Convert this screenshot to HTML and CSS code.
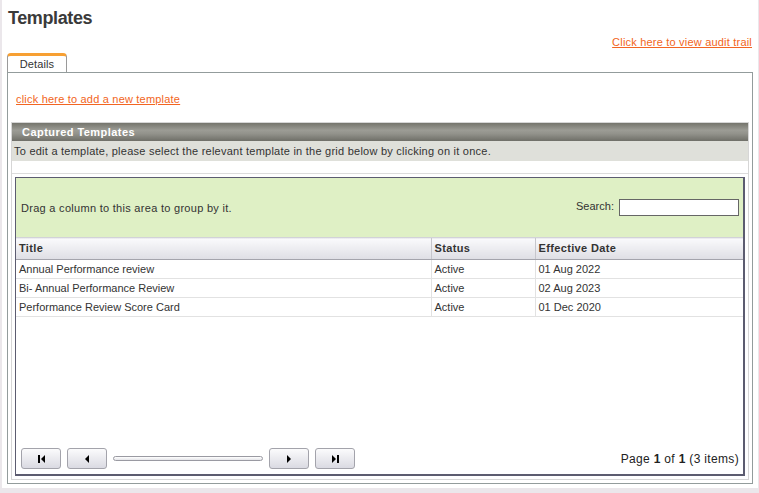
FILE: index.html
```html
<!DOCTYPE html>
<html>
<head>
  <title>Templates</title>
  <meta charset="UTF-8">
  <link rel="stylesheet" href="styles.css">
</head>
<body>
  <div class="page">
    <h1>Templates</h1>
    <div class="audit">
      <a href="#" class="link">Click here to view audit trail</a>
    </div>
    <div class="tabs">
      <span class="tab">Details</span>
    </div>
    <div class="tab-panel">
      <div class="add-row">
        <a href="#" class="link">click here to add a new template</a>
      </div>
      <div class="panel">
        <div class="panel-title">Captured Templates</div>
        <div class="panel-note">To edit a template, please select the relevant template in the grid below by clicking on it once.</div>
        <div class="panel-spacer"></div>
        <div class="grid-wrap">
          <div class="grid">
            <div class="group-bar">
              <span class="group-hint">Drag a column to this area to group by it.</span>
              <label class="search">Search: <input type="text"></label>
            </div>
            <table class="grid-table">
              <colgroup>
                <col class="col-title">
                <col class="col-status">
                <col>
              </colgroup>
              <thead>
                <tr>
                  <th>Title</th>
                  <th>Status</th>
                  <th>Effective Date</th>
                </tr>
              </thead>
              <tbody>
                <tr>
                  <td>Annual Performance review</td>
                  <td>Active</td>
                  <td>01 Aug 2022</td>
                </tr>
                <tr>
                  <td>Bi- Annual Performance Review</td>
                  <td>Active</td>
                  <td>02 Aug 2023</td>
                </tr>
                <tr>
                  <td>Performance Review Score Card</td>
                  <td>Active</td>
                  <td>01 Dec 2020</td>
                </tr>
              </tbody>
            </table>
            <div class="grid-fill"></div>
            <div class="pager">
              <button class="pager-btn">
                <svg width="7" height="8" viewBox="0 0 7 8"><rect x="0" y="0" width="2" height="8"/><polygon points="7,0 7,8 3,4"/></svg>
              </button>
              <button class="pager-btn">
                <svg width="4" height="8" viewBox="0 0 4 8"><polygon points="4,0 4,8 0,4"/></svg>
              </button>
              <div class="pager-track"></div>
              <button class="pager-btn">
                <svg width="4" height="8" viewBox="0 0 4 8"><polygon points="0,0 0,8 4,4"/></svg>
              </button>
              <button class="pager-btn">
                <svg width="7" height="8" viewBox="0 0 7 8"><polygon points="0,0 0,8 4,4"/><rect x="5" y="0" width="2" height="8"/></svg>
              </button>
              <span class="pager-info">Page <b>1</b> of <b>1</b> (3 items)</span>
            </div>
          </div>
        </div>
      </div>
    </div>
  </div>
</body>
</html>
```

FILE: styles.css
```css
body {
  margin: 0;
  background-color: #ebe7eb;
  font-family: "Liberation Sans", Arial, sans-serif;
  font-size: 11px;
  color: #333;
}

.page {
  background-color: #fff;
  margin: 0 1px 0 2px;
  height: 488px;
  padding: 0 5px;
  box-sizing: border-box;
}

h1 {
  margin: 0;
  padding: 7px 0 0 1px;
  font-size: 18px;
  line-height: 22px;
  letter-spacing: -0.4px;
  color: #3a3a3a;
}

.link {
  color: #f26522;
  text-decoration: underline;
  letter-spacing: 0.2px;
}

.audit {
  margin-top: 7px;
  line-height: 13px;
  text-align: right;
  padding-right: 1px;
}

.tabs {
  display: flex;
  margin-top: 4px;
}

.tab {
  width: 58px;
  height: 16px;
  line-height: 16px;
  text-align: center;
  border: 1px solid #9a9a9a;
  border-top: 3px solid #f7a033;
  border-bottom: none;
  border-radius: 4px 4px 0 0;
  color: #333;
  letter-spacing: 0.1px;
}

.tab-panel {
  border: 1px solid #939c9c;
  padding: 3px;
}

.add-row {
  margin: 17px 0 16px;
  padding-left: 5px;
  line-height: 13px;
}

.panel {
  border: 1px solid #d6d6d6;
}

.panel-title {
  height: 18px;
  line-height: 18px;
  padding-left: 10px;
  font-weight: bold;
  letter-spacing: 0.45px;
  color: #fff;
  background: linear-gradient(#74746c, #9c9c95 40%, #92928b 60%, #6f6f68);
}

.panel-note {
  height: 20px;
  line-height: 20px;
  padding-left: 2px;
  letter-spacing: 0.24px;
  background-color: #dfe0da;
  color: #333;
}

.panel-spacer {
  height: 12px;
}

.grid-wrap {
  border-top: 1px solid #dcdcdc;
  padding: 3px;
}

.grid {
  height: 299px;
  box-sizing: border-box;
  border: 1px solid #5c5c70;
  border-width: 1px 2px 2px 1px;
  display: flex;
  flex-direction: column;
}

.group-bar {
  height: 59px;
  flex: none;
  display: flex;
  align-items: center;
  justify-content: space-between;
  padding: 0 4px 0 5px;
  background-color: #dff0c5;
  color: #333;
}

.group-hint {
  letter-spacing: 0.29px;
}

.search input {
  width: 120px;
  height: 17px;
  box-sizing: border-box;
  margin: 0 0 0 2px;
  border: 1px solid #666;
  padding: 0 2px;
  vertical-align: middle;
}

.grid-table {
  width: 100%;
  border-collapse: collapse;
  table-layout: fixed;
  flex: none;
}

.col-title {
  width: 415px;
}

.col-status {
  width: 104px;
}

.grid-table th {
  height: 21px;
  line-height: 21px;
  padding: 0 0 0 3px;
  text-align: left;
  font-weight: bold;
  letter-spacing: 0.35px;
  color: #333;
  background: linear-gradient(#fafafc, #dedee4);
  border-top: 1px solid #d2d2d8;
  border-bottom: 1px solid #a4a4ac;
}

.grid-table th + th {
  border-left: 1px solid #c6c6cc;
}

.grid-table td {
  height: 17px;
  line-height: 17px;
  padding: 1px 0 0 3px;
  border-bottom: 1px solid #e2e2e2;
  white-space: nowrap;
  color: #333;
}

.grid-table td + td {
  border-left: 1px solid #e2e2e2;
}

.grid-fill {
  flex: 1;
}

.pager {
  height: 30px;
  flex: none;
  box-sizing: border-box;
  padding: 4px 4px 5px 5px;
  display: flex;
  align-items: center;
  gap: 6px;
}

.pager-btn {
  width: 40px;
  height: 21px;
  padding: 0;
  border: 1px solid #a3a3ab;
  border-radius: 3px;
  background: linear-gradient(#fbfbfc, #dadae2);
  display: flex;
  align-items: center;
  justify-content: center;
}

.pager-btn svg {
  fill: #000;
}

.pager-track {
  width: 150px;
  height: 5px;
  box-sizing: border-box;
  border: 1px solid #9a9aa2;
  border-radius: 3px;
  background: linear-gradient(#fff, #e4e4e8);
}

.pager-info {
  margin-left: auto;
  font-size: 12px;
  letter-spacing: 0.33px;
  color: #222;
}
```
